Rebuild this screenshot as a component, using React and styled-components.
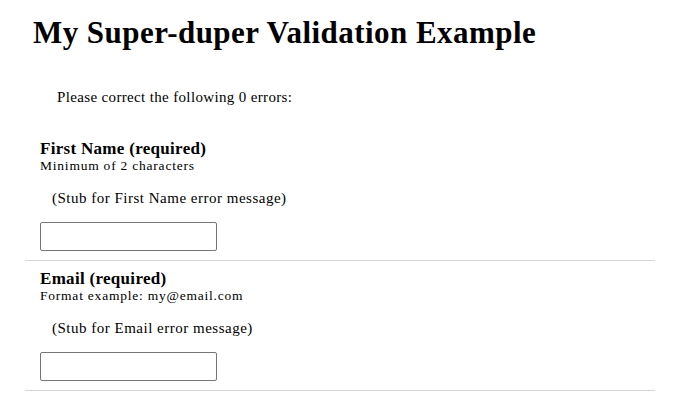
import React from "react";
import styled, { createGlobalStyle } from "styled-components";

const GlobalStyle = createGlobalStyle`
  body {
    margin: 8px;
    background: #ffffff;
    color: #000000;
    font-family: "Liberation Serif", "Times New Roman", serif;
  }
`;

const Page = styled.div`
  padding: 0 17px;
`;

const Title = styled.h1`
  font-size: 31px;
  font-weight: bold;
  letter-spacing: 0.45px;
  line-height: 36px;
  margin: 7px 0 0 8px;
`;

const Summary = styled.p`
  font-size: 15px;
  letter-spacing: 0.35px;
  line-height: 17px;
  margin: 38px 0 0 32px;
`;

const Form = styled.form`
  margin-top: 25px;
`;

const Field = styled.div`
  padding: 8px 0 9px 15px;
  border-bottom: 1px solid #d3d3d3;
`;

const Label = styled.label`
  display: block;
  font-size: 17px;
  font-weight: bold;
  letter-spacing: 0.3px;
  line-height: 19px;
`;

const Hint = styled.div`
  font-size: 13.5px;
  letter-spacing: 0.78px;
  line-height: 15px;
`;

const ErrorStub = styled.div`
  font-size: 15px;
  letter-spacing: 0.5px;
  line-height: 17px;
  margin: 17px 0 15px 12px;
`;

const Input = styled.input`
  display: block;
  box-sizing: border-box;
  width: 177px;
  height: 29px;
  margin: 0;
  border: 1px solid #767676;
  border-radius: 2px;
  padding: 2px 4px;
  font-size: 14px;
`;

const fields = [
  { name: "First Name", hint: "Minimum of 2 characters", type: "text" },
  { name: "Email", hint: "Format example: my@email.com", type: "email" },
];

export default function App() {
  return (
    <>
      <GlobalStyle />
      <Page>
        <Title>My Super-duper Validation Example</Title>
        <Summary>Please correct the following 0 errors:</Summary>
        <Form>
          {fields.map((f) => (
            <Field key={f.name}>
              <Label>{f.name} (required)</Label>
              <Hint>{f.hint}</Hint>
              <ErrorStub>(Stub for {f.name} error message)</ErrorStub>
              <Input type={f.type} />
            </Field>
          ))}
        </Form>
      </Page>
    </>
  );
}
